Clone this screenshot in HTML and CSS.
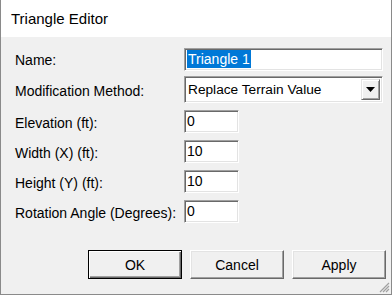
FILE: index.html
```html
<!DOCTYPE html>
<html lang="en">
<head>
    <meta charset="UTF-8">
    <title>Triangle Editor</title>
    <link rel="stylesheet" href="styles.css">
</head>
<body>
    <div class="window">
        <div class="titlebar">Triangle Editor</div>
        <div class="content">
            <div class="form">
                <label class="label">Name:</label>
                <div class="field wide name"><span class="selected">Triangle 1</span></div>

                <label class="label">Modification Method:</label>
                <div class="combo">
                    <span class="combo-text">Replace Terrain Value</span>
                    <span class="combo-btn">
                        <svg width="9" height="5" viewBox="0 0 9 5"><path d="M0 0h9L4.5 5z" fill="#000"/></svg>
                    </span>
                </div>

                <label class="label">Elevation (ft):</label>
                <div class="field small">0</div>

                <label class="label">Width (X) (ft):</label>
                <div class="field small">10</div>

                <label class="label">Height (Y) (ft):</label>
                <div class="field small">10</div>

                <label class="label">Rotation Angle (Degrees):</label>
                <div class="field small">0</div>
            </div>
            <div class="buttons">
                <button class="btn default">OK</button>
                <button class="btn">Cancel</button>
                <button class="btn">Apply</button>
            </div>
            <div class="grip">
                <svg width="11" height="11" viewBox="0 0 11 11">
                    <path d="M10 1L1 10M10 4L4 10M10 7L7 10" stroke="#a0a0a0" stroke-width="1.2"/>
                </svg>
            </div>
        </div>
    </div>
</body>
</html>
```

FILE: styles.css
```css
body {
    margin: 0;
    font-family: "Liberation Sans", Arial, sans-serif;
    background: #fff;
}
.window {
    width: 392px;
    height: 295px;
    box-sizing: border-box;
    border: 1px solid #8a8a8a;
    border-top: none;
    display: flex;
    flex-direction: column;
}
.titlebar {
    height: 37px;
    background: #fff;
    font-size: 15px;
    color: #000;
    padding-left: 10px;
    line-height: 38px;
    box-sizing: border-box;
}
.content {
    flex: 1;
    background: #f0f0f0;
    position: relative;
    padding: 11px 0 0 14px;
}
.form {
    display: grid;
    grid-template-columns: 169px auto;
    row-gap: 7px;
    align-items: center;
}
.form .field.name {
    margin-bottom: -2px;
}
.label {
    font-size: 14px;
    color: #000;
    padding-top: 2px;
}
.field {
    box-sizing: border-box;
    height: 23px;
    background: #fff;
    border-top: 1px solid #a0a0a0;
    border-left: 1px solid #a0a0a0;
    border-right: 1px solid #fff;
    border-bottom: 1px solid #fff;
    box-shadow: inset 1px 1px 0 #696969, inset -1px -1px 0 #e3e3e3;
    font-size: 14px;
    line-height: 21px;
    padding-left: 2px;
    color: #000;
}
.wide {
    width: 199px;
}
.small {
    width: 55px;
}
.selected {
    background: #0078d7;
    color: #fff;
    padding: 1px 1px;
}
.combo {
    box-sizing: border-box;
    width: 199px;
    height: 27px;
    background: #fff;
    border-top: 1px solid #a0a0a0;
    border-left: 1px solid #a0a0a0;
    border-right: 1px solid #fff;
    border-bottom: 1px solid #fff;
    box-shadow: inset 1px 1px 0 #696969, inset -1px -1px 0 #e3e3e3;
    display: flex;
    align-items: center;
    padding: 2px 2px 2px 3px;
    font-size: 13.7px;
}
.combo-text {
    flex: 1;
}
.combo-btn {
    width: 19px;
    height: 21px;
    box-sizing: border-box;
    background: #f0f0f0;
    border-top: 1px solid #e3e3e3;
    border-left: 1px solid #e3e3e3;
    border-right: 1px solid #696969;
    border-bottom: 1px solid #696969;
    box-shadow: inset 1px 1px 0 #fff, inset -1px -1px 0 #a0a0a0;
    display: flex;
    align-items: center;
    justify-content: center;
}
.buttons {
    display: flex;
    gap: 8px;
    margin: 27px 0 0 73px;
}
.btn {
    width: 94px;
    height: 29px;
    box-sizing: border-box;
    font-family: "Liberation Sans", Arial, sans-serif;
    font-size: 14px;
    color: #000;
    background: #f0f0f0;
    border-top: 1px solid #fff;
    border-left: 1px solid #fff;
    border-right: 1px solid #696969;
    border-bottom: 1px solid #696969;
    box-shadow: inset -1px -1px 0 #a0a0a0, inset 1px 1px 0 #e3e3e3;
    padding: 0;
}
.btn.default {
    border: 1px solid #000;
    box-shadow: inset 1px 1px 0 #fff, inset -1px -1px 0 #696969, inset -2px -2px 0 #a0a0a0;
}
.grip {
    position: absolute;
    right: 1px;
    bottom: 1px;
    line-height: 0;
}
```
